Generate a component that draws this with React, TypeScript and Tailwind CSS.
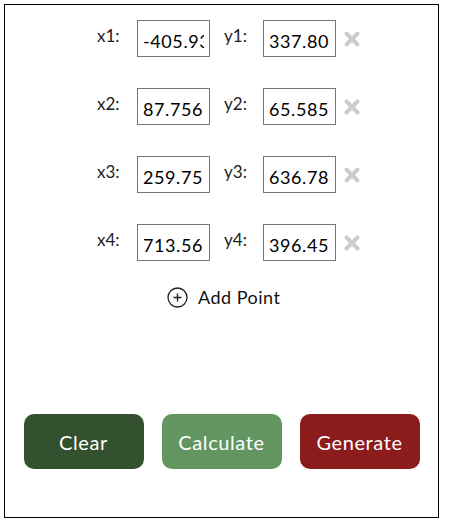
import { useState } from 'react'

type Pt = { x: string; y: string }

const INITIAL: Pt[] = [
  { x: '-405.93', y: '337.808' },
  { x: '87.7567', y: '65.5856' },
  { x: '259.751', y: '636.786' },
  { x: '713.562', y: '396.453' },
]

function RemoveIcon() {
  return (
    <svg width="18" height="18" viewBox="0 0 18 18" className="block">
      <path d="M3.5 3.5 L14.5 14.5 M14.5 3.5 L3.5 14.5" stroke="#cbcbcb" strokeWidth="4" strokeLinecap="round" />
    </svg>
  )
}

function PlusCircle() {
  return (
    <svg width="21" height="21" viewBox="0 0 21 21" className="block">
      <circle cx="10.5" cy="10.5" r="9.5" fill="none" stroke="#222" strokeWidth="1.3" />
      <path d="M10.5 6.5 V14.5 M6.5 10.5 H14.5" stroke="#222" strokeWidth="1.4" />
    </svg>
  )
}

export default function App() {
  const [points, setPoints] = useState<Pt[]>(INITIAL)

  const update = (i: number, key: 'x' | 'y', v: string) => {
    setPoints((prev) => prev.map((p, j) => (j === i ? { ...p, [key]: v } : p)))
  }

  return (
    <div className="p-1 font-['Lato',sans-serif]">
      <div className="w-[435px] h-[514px] border border-black flex flex-col">
        {/* Points */}
        <div className="pt-[15px] pl-[92px] flex flex-col gap-[31px]">
          {points.map((p, i) => (
            <div key={i} className="flex items-start h-[37px]">
              <label className="w-[40px] pt-[5px] text-[17px] leading-[22px] text-[#222]">x{i + 1}:</label>
              <input
                value={p.x}
                onChange={(e) => update(i, 'x', e.target.value)}
                className="w-[73px] h-[37px] border border-[#767676] px-[5px] pt-[4px] text-[18px] tracking-[0.6px] text-black outline-none"
              />
              <label className="w-[53px] pl-[14px] pt-[5px] text-[17px] leading-[22px] text-[#222]">y{i + 1}:</label>
              <input
                value={p.y}
                onChange={(e) => update(i, 'y', e.target.value)}
                className="w-[73px] h-[37px] border border-[#767676] px-[5px] pt-[4px] text-[18px] tracking-[0.6px] text-black outline-none"
              />
              <button
                onClick={() => setPoints((prev) => prev.filter((_, j) => j !== i))}
                className="ml-[7px] mt-[10px]"
              >
                <RemoveIcon />
              </button>
            </div>
          ))}
        </div>

        {/* Add point */}
        <button
          onClick={() => setPoints((prev) => [...prev, { x: '', y: '' }])}
          className="mt-[23px] ml-[162px] flex items-center gap-[10px] self-start text-[18px] tracking-[0.5px] text-[#111]"
        >
          <PlusCircle />
          Add Point
        </button>

        {/* Actions */}
        <div className="mt-[103px] flex justify-center gap-[18px]">
          <button className="w-[120px] h-[55px] rounded-[10px] bg-[#33512f] text-white text-[20px] tracking-[0.6px]">Clear</button>
          <button className="w-[120px] h-[55px] rounded-[10px] bg-[#62955f] text-white text-[20px] tracking-[0.6px]">Calculate</button>
          <button className="w-[120px] h-[55px] rounded-[10px] bg-[#8c1b1b] text-white text-[20px] tracking-[0.6px]">Generate</button>
        </div>
      </div>
    </div>
  )
}
